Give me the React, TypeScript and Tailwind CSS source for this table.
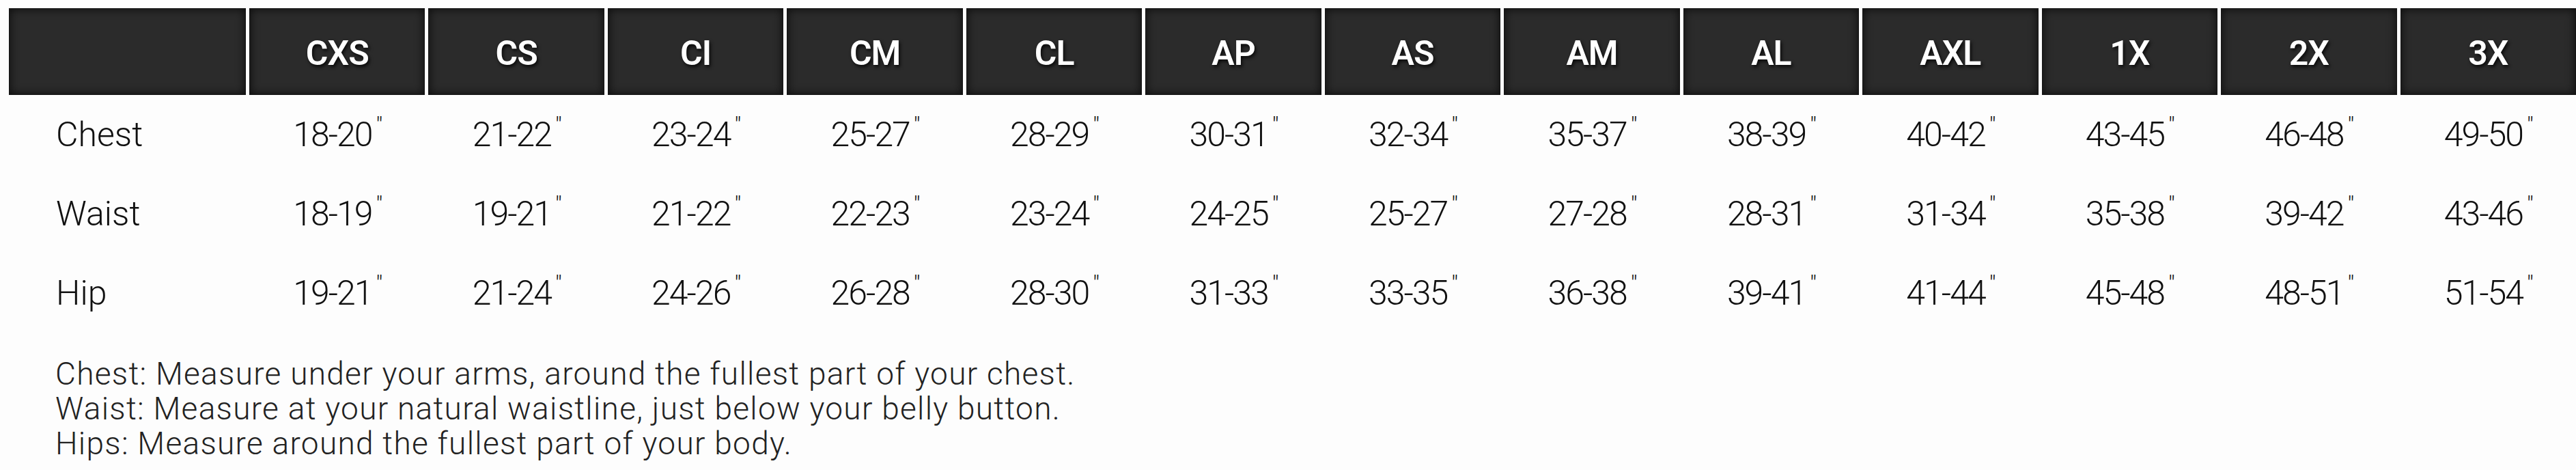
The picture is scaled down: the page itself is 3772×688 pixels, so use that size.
const SIZES = ["CXS", "CS", "CI", "CM", "CL", "AP", "AS", "AM", "AL", "AXL", "1X", "2X", "3X"];

const ROWS: { label: string; values: string[] }[] = [
  {
    label: "Chest",
    values: ["18-20", "21-22", "23-24", "25-27", "28-29", "30-31", "32-34", "35-37", "38-39", "40-42", "43-45", "46-48", "49-50"],
  },
  {
    label: "Waist",
    values: ["18-19", "19-21", "21-22", "22-23", "23-24", "24-25", "25-27", "27-28", "28-31", "31-34", "35-38", "39-42", "43-46"],
  },
  {
    label: "Hip",
    values: ["19-21", "21-24", "24-26", "26-28", "28-30", "31-33", "33-35", "36-38", "39-41", "41-44", "45-48", "48-51", "51-54"],
  },
];

const NOTES = [
  "Chest: Measure under your arms, around the fullest part of your chest.",
  "Waist: Measure at your natural waistline, just below your belly button.",
  "Hips: Measure around the fullest part of your body.",
];

function HeadCell({ children }: { children?: string }) {
  return (
    <div className="flex h-[127px] items-center justify-center border border-[#151515] bg-[#2b2b2b] pt-[4px] shadow-[inset_0_0_14px_rgba(0,0,0,0.75)]">
      <span className="text-[50px] font-semibold leading-none tracking-[-0.02em] text-white [text-shadow:2px_3px_5px_rgba(0,0,0,0.8)]">
        {children}
      </span>
    </div>
  );
}

export default function App() {
  return (
    <div className="min-h-screen w-[3772px] overflow-hidden bg-[#fdfdfd] pl-[13px] pt-[12px] font-['Roboto',_sans-serif] text-[#111]">
      <div className="grid grid-cols-[347px_repeat(13,minmax(0,1fr))] gap-x-[5px]">
        <HeadCell />
        {SIZES.map((s) => (
          <HeadCell key={s}>{s}</HeadCell>
        ))}

        {ROWS.map((row) => (
          <div key={row.label} className="contents">
            <div className="flex h-[116px] items-center pl-[69px] text-[50px] font-light leading-none">
              {row.label}
            </div>
            {row.values.map((v, i) => (
              <div
                key={i}
                className="flex h-[116px] items-center justify-center text-[50px] font-light leading-none tracking-[-0.04em]"
              >
                <span>
                  {v}
                  <sup className="top-[-19px] ml-[6px] text-[34px]">″</sup>
                </span>
              </div>
            ))}
          </div>
        ))}
      </div>

      {/* Measuring notes */}
      <div className="mt-[35px] pl-[68px] text-[46px] font-light leading-[51px] tracking-[0.028em] text-[#222]">
        {NOTES.map((n) => (
          <p key={n}>{n}</p>
        ))}
      </div>
    </div>
  );
}
